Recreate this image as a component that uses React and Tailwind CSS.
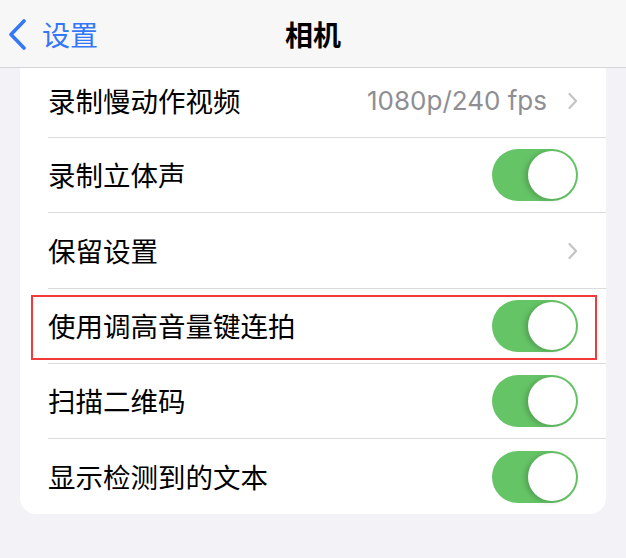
import React from "react";

const font = { fontFamily: '"Noto Sans CJK SC", "Noto Sans", sans-serif' };

const Toggle = () => (
  <div className="w-[86px] h-[52px] rounded-full bg-[#65c466] p-[2px] flex justify-end">
    <div className="w-[48px] h-[48px] rounded-full bg-white shadow-[-3px_1px_5px_rgba(0,0,0,0.18)]" />
  </div>
);

const Chevron = () => (
  <svg width="12" height="20" viewBox="0 0 12 20" fill="none">
    <path d="M3.5 3l6.5 7-6.5 7" stroke="#c4c4c7" strokeWidth="2.2" strokeLinecap="round" strokeLinejoin="round" />
  </svg>
);

const rows = [
  { label: "录制慢动作视频", value: "1080p/240 fps", kind: "link", h: "h-[70px]" },
  { label: "录制立体声", kind: "toggle", h: "h-[75px]" },
  { label: "保留设置", kind: "link", h: "h-[76px]" },
  { label: "使用调高音量键连拍", kind: "toggle", marked: true, h: "h-[75px]" },
  { label: "扫描二维码", kind: "toggle", h: "h-[75px]" },
  { label: "显示检测到的文本", kind: "toggle", last: true, h: "h-[75px]" },
];

export default function App() {
  return (
    <div className="w-[626px] h-[558px] bg-[#f2f2f7] overflow-hidden" style={font}>
      {/* Nav bar */}
      <div className="h-[68px] bg-[#f7f7f7] border-b border-[#d6d6d8] flex items-center relative">
        <div className="flex items-center pl-[7px] text-[#3478f6]">
          <svg width="22" height="32" viewBox="0 0 22 32" fill="none">
            <path d="M17 3L4 16.5 17 30" stroke="#3478f6" strokeWidth="3.6" strokeLinecap="round" strokeLinejoin="round" />
          </svg>
          <span className="ml-[13px] text-[28px] leading-none">设置</span>
        </div>
        <div className="absolute inset-0 flex items-center justify-center pointer-events-none">
          <span className="text-[28px] font-bold text-black leading-none">相机</span>
        </div>
      </div>

      {/* Card */}
      <div className="mx-[20px] bg-white rounded-b-[16px]">
        {rows.map((r) => (
          <div key={r.label} className={`relative pl-[28px] ${r.h}`}>
            <div
              className={`h-full flex items-center pr-[28px] ${r.last ? "" : "border-b border-[#dcdcde]"} ${r.h === "h-[70px]" ? "pb-[4px]" : ""}`}
            >
              <span className="text-[27.5px] text-black flex-1 leading-none">{r.label}</span>
              {r.kind === "toggle" ? (
                <Toggle />
              ) : (
                <div className="flex items-center gap-[19px]">
                  {r.value && (
                    <span className="text-[26px] text-[#8e8e93] leading-none" style={{ fontFamily: "Inter, sans-serif" }}>
                      {r.value}
                    </span>
                  )}
                  <Chevron />
                </div>
              )}
            </div>
            {r.marked && (
              <div className="absolute left-[11px] right-[9px] top-[6px] bottom-[4px] border-2 border-[#f23a3a] pointer-events-none" />
            )}
          </div>
        ))}
      </div>
    </div>
  );
}
